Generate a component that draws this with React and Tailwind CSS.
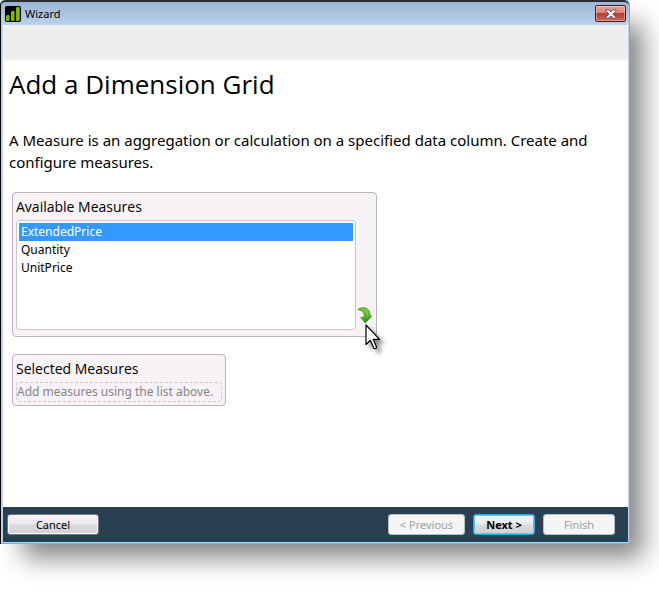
import React, { useState } from 'react'

const MEASURES = ['ExtendedPrice', 'Quantity', 'UnitPrice']

const AppLogo = () => (
  <svg width="16" height="16" viewBox="0 0 16 16" aria-hidden="true">
    <rect width="16" height="16" rx="2" fill="#000" />
    <rect x="1" y="9" width="3.500" height="6" rx="1.200" fill="#7fba00" />
    <rect x="6" y="5" width="3.500" height="10" rx="1.200" fill="#7fba00" />
    <rect x="11" y="1" width="3.800" height="14" rx="1.200" fill="#7fba00" />
  </svg>
)

const CloseIcon = () => (
  <svg width="12" height="10" viewBox="0 0 12 10" aria-hidden="true">
    <path
      d="M1 .8h3L6 3l2-2.200h3v1L8 5l3 3.200v1H8L6 7 4 9.200H1v-1L4 5 1 1.800z"
      fill="#fff"
      stroke="#4d4456"
      strokeWidth="0.9"
      strokeLinejoin="round"
    />
  </svg>
)

const AddArrow = () => (
  <svg width="16" height="17" viewBox="0 0 16 17" aria-hidden="true">
    <defs>
      <linearGradient id="leaf" x1="0" y1="0" x2="0.5" y2="1">
        <stop offset="0" stopColor="#4a9420" />
        <stop offset="0.45" stopColor="#6cc233" />
        <stop offset="1" stopColor="#2f8a14" />
      </linearGradient>
    </defs>
    <path
      d="M0 3C2 .8 4.500 0 7 .3c4.500.6 6.800 3.600 6.600 8.500l2-.3L8.300 16.600 2.800 10l3.900-.3C7 6.400 4.800 3 0 3z"
      fill="url(#leaf)"
    />
    <path d="M4 1.800c4.800 0 7.300 3.200 6.900 8.500" fill="none" stroke="#a9e070" strokeWidth="1.300" opacity="0.55" />
  </svg>
)

const Pointer = () => (
  <svg
    className="absolute left-2 top-[17px] z-10 pointer-events-none overflow-visible drop-shadow-[4px_4px_2px_rgba(0,0,0,0.45)]"
    width="16"
    height="26"
    viewBox="0 0 16 26"
    aria-hidden="true"
  >
    <path
      d="M1 1v19.500l4.400-4.200 3.300 7.800c.6 1.200 3.300.3 2.800-1.200l-3.300-7.600h6.300z"
      fill="#fff"
      stroke="#000"
      strokeWidth="1.200"
      strokeLinejoin="round"
    />
  </svg>
)

const buttonBase = 'h-[21px] rounded-[3px] border text-[11px] leading-4 flex items-center justify-center'
const normalLook =
  'border-[#77737a] bg-[linear-gradient(#f6f2f6,#ece9ed_48%,#dcd9dd_52%,#d4d1d5)] text-black shadow-[inset_0_0_0_1px_#fbfafb]'
const disabledLook = 'border-[#b5bcc2] bg-[#f5f5f5] text-[#a0a0a0]'
const defaultLook =
  'border-[#2fa8e8] bg-[linear-gradient(#f6f2f6,#ece9ed_48%,#dcd9dd_52%,#d4d1d5)] font-bold text-black shadow-[inset_0_0_0_1px_#4cc8f8]'

const TitleBar = () => (
  <header className="h-[25px] flex items-center justify-between pl-1 pr-[3px] border-t-2 border-[#2b2b33] rounded-t-[5px] bg-linear-to-b from-[#9cb4d4] to-[#bbd2ec]">
    <div className="flex items-center gap-1">
      <AppLogo />
      <span className="text-[11px] leading-4">Wizard</span>
    </div>
    <button
      type="button"
      aria-label="Close"
      className="w-[31px] h-[17px] flex items-center justify-center rounded-[2px] border border-[#431b20] bg-[linear-gradient(#e5a59b,#d98376_45%,#bd3a26_50%,#cf6a54)] shadow-[inset_0_0_0_1px_rgba(255,255,255,0.35)]"
    >
      <CloseIcon />
    </button>
  </header>
)

const App = () => {
  const [measure, setMeasure] = useState('ExtendedPrice')

  return (
    <div className="min-h-screen flex bg-white pr-[29px] pb-[53px] overflow-hidden font-['Noto_Sans','Open_Sans',sans-serif] text-black">
      <div className="flex-1 flex flex-col rounded-t-[5px] border-l border-black bg-[#bbd2ec] shadow-[18px_19px_24px_-5px_rgba(0,0,0,0.48)]">
        <div className="flex-1 flex flex-col rounded-t-[5px] border-r border-b border-[#33cdec]">
          <TitleBar />
          <div className="flex-1 flex flex-col ml-[2px] mr-px mb-px bg-white">
            <div className="h-[35px] rounded-[4px] bg-[#eeeeee]" />

            <main className="flex-1 px-[6px] pt-[6px] pb-6">
              <h1 className="font-['Open_Sans','Noto_Sans',sans-serif] text-[26px] leading-9">
                Add a Dimension Grid
              </h1>
              <p className="mt-[27px] text-[15px] leading-[22px]">
                A Measure is an aggregation or calculation on a specified data column. Create and
                configure measures.
              </p>

              {/* available measures */}
              <section className="mt-[19px] ml-[3px] w-[365px] h-[145px] flex flex-col rounded-[4px] border border-[#b9b5b9] bg-[#f6f2f6] px-[3px] pt-1 pb-[6px]">
                <label htmlFor="available" className="font-['Open_Sans','Noto_Sans',sans-serif] text-sm leading-5">
                  Available Measures
                </label>
                <div className="flex-1 flex items-end mt-[3px]">
                  <select
                    id="available"
                    size={6}
                    value={measure}
                    onChange={(e) => setMeasure(e.target.value)}
                    className="w-[340px] h-[110px] p-[2px] rounded-[4px] border border-[#c9c7c9] bg-white bg-none text-xs outline-none overflow-hidden"
                  >
                    {MEASURES.map((name) => (
                      <option
                        key={name}
                        value={name}
                        className="h-[18px] min-h-0 px-[2px] py-0 leading-[18px] checked:bg-[linear-gradient(#3399ff,#3399ff)] checked:text-white"
                      >
                        {name}
                      </option>
                    ))}
                  </select>
                  <div className="relative ml-px mb-[6px]">
                    <button type="button" aria-label="Add measure" className="block">
                      <AddArrow />
                    </button>
                    <Pointer />
                  </div>
                </div>
              </section>

              {/* selected measures */}
              <section className="mt-[17px] ml-[3px] w-[214px] rounded-[4px] border border-[#b9b5b9] bg-[#f6f2f6] px-[3px] pt-1 pb-[3px]">
                <h2 className="font-['Open_Sans','Noto_Sans',sans-serif] text-sm leading-5">Selected Measures</h2>
                <p className="mt-[3px] h-5 rounded-[4px] border border-dashed border-[#c9c7c9] text-xs leading-[18px] text-[#868489] whitespace-nowrap">
                  Add measures using the list above.
                </p>
              </section>
            </main>

            <footer className="h-[35px] flex items-center gap-2 bg-[#293f52] pl-1 pr-[13px]">
              <button type="button" className={`${buttonBase} ${normalLook} w-[92px]`}>
                Cancel
              </button>
              <div className="flex-1" />
              <button type="button" disabled className={`${buttonBase} ${disabledLook} w-[77px]`}>
                &lt; Previous
              </button>
              <button type="button" className={`${buttonBase} ${defaultLook} w-[62px]`}>
                Next &gt;
              </button>
              <button type="button" disabled className={`${buttonBase} ${disabledLook} w-[72px]`}>
                Finish
              </button>
            </footer>
          </div>
        </div>
      </div>
    </div>
  )
}

export default App
